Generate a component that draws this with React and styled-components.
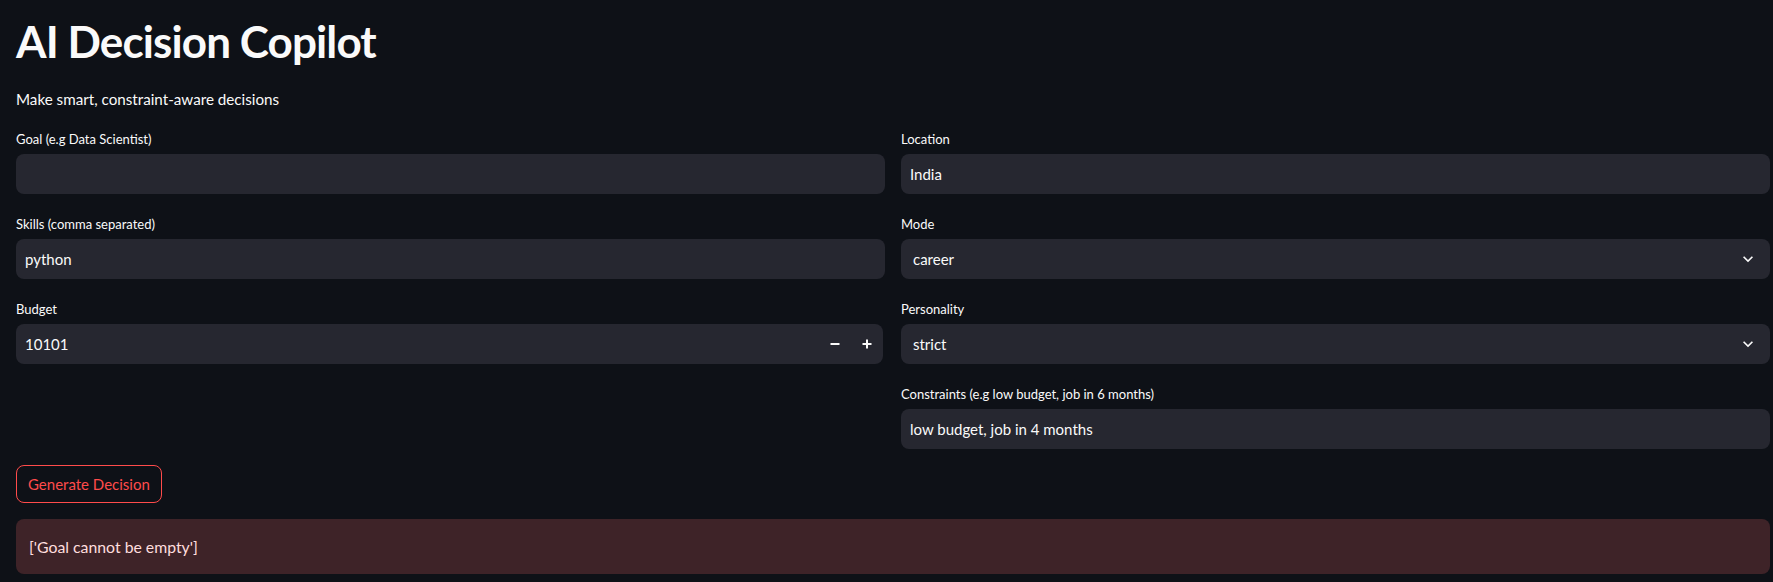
import styled, { createGlobalStyle } from 'styled-components';

const GlobalStyle = createGlobalStyle`
  html, body {
    margin: 0;
    padding: 0;
    background: #0e1117;
  }
  body {
    font-family: 'Lato', 'Noto Sans', sans-serif;
    color: #fafafa;
  }
`;

const Page = styled.div`
  width: 1754px;
  padding: 14px 3px 8px 16px;
  display: flex;
  flex-direction: column;
`;

const Title = styled.h1`
  margin: 0;
  font-size: 44px;
  font-weight: 700;
  line-height: 54px;
  letter-spacing: -0.9px;
`;

const Subtitle = styled.p`
  margin: 21px 0 0;
  font-size: 15.2px;
  line-height: 20px;
`;

const FormGrid = styled.div`
  display: grid;
  grid-template-columns: 1fr 1fr;
  column-gap: 16px;
  align-items: start;
`;

const Column = styled.div`
  display: flex;
  flex-direction: column;
`;

const Field = styled.div`
  display: flex;
  flex-direction: column;
  padding-top: 20px;
`;

const Label = styled.label`
  font-size: 13px;
  line-height: 21px;
  margin-bottom: 4px;
  color: #fafafa;
`;

const Box = styled.div`
  height: 40px;
  background: #262730;
  border-radius: 8px;
  display: flex;
  align-items: center;
  padding: 0 ${(p) => (p.$select ? '12px' : '0')} 0 ${(p) => (p.$select ? '12px' : '9px')};
  box-sizing: border-box;
  margin-right: ${(p) => (p.$narrow ? '2px' : '0')};
`;

const Value = styled.span`
  flex: 1;
  font-size: 15px;
  color: #fafafa;
`;

const StepButton = styled.span`
  width: 32px;
  height: 40px;
  display: flex;
  align-items: center;
  justify-content: center;
`;

const Action = styled.button`
  margin-top: 16px;
  align-self: flex-start;
  height: 38px;
  padding: 0 11px;
  background: transparent;
  border: 1px solid #ff4b4b;
  border-radius: 8px;
  color: #ff4b4b;
  font-family: inherit;
  font-size: 15px;
`;

const ErrorBox = styled.div`
  margin-top: 16px;
  height: 55px;
  border-radius: 8px;
  background: #3e2328;
  display: flex;
  align-items: center;
  padding: 0 13px;
  font-size: 15.8px;
  color: #ffdede;
`;

const Chevron = () => (
  <svg width="20" height="20" viewBox="0 0 24 24" fill="#fafafa">
    <path d="M7.41 8.59 12 13.17l4.59-4.58L18 10l-6 6-6-6z" />
  </svg>
);

const Minus = () => (
  <svg width="10" height="10" viewBox="0 0 10 10">
    <rect x="0.5" y="4" width="9" height="2" fill="#fafafa" />
  </svg>
);

const Plus = () => (
  <svg width="10" height="10" viewBox="0 0 10 10">
    <rect x="0.5" y="4" width="9" height="2" fill="#fafafa" />
    <rect x="4" y="0.5" width="2" height="9" fill="#fafafa" />
  </svg>
);

const TextInput = ({ label, value }) => (
  <Field>
    <Label>{label}</Label>
    <Box>
      <Value>{value}</Value>
    </Box>
  </Field>
);

const SelectInput = ({ label, value }) => (
  <Field>
    <Label>{label}</Label>
    <Box $select>
      <Value>{value}</Value>
      <Chevron />
    </Box>
  </Field>
);

const NumberInput = ({ label, value }) => (
  <Field>
    <Label>{label}</Label>
    <Box $narrow>
      <Value>{value}</Value>
      <StepButton>
        <Minus />
      </StepButton>
      <StepButton>
        <Plus />
      </StepButton>
    </Box>
  </Field>
);

const App = () => (
  <>
    <GlobalStyle />
    <Page>
      <Title>AI Decision Copilot</Title>
      <Subtitle>Make smart, constraint-aware decisions</Subtitle>
      <FormGrid>
        <Column>
          <TextInput label="Goal (e.g Data Scientist)" value="" />
          <TextInput label="Skills (comma separated)" value="python" />
          <NumberInput label="Budget" value="10101" />
        </Column>
        <Column>
          <TextInput label="Location" value="India" />
          <SelectInput label="Mode" value="career" />
          <SelectInput label="Personality" value="strict" />
          <TextInput label="Constraints (e.g low budget, job in 6 months)" value="low budget, job in 4 months" />
        </Column>
      </FormGrid>
      <Action>Generate Decision</Action>
      <ErrorBox>['Goal cannot be empty']</ErrorBox>
    </Page>
  </>
);

export default App;
